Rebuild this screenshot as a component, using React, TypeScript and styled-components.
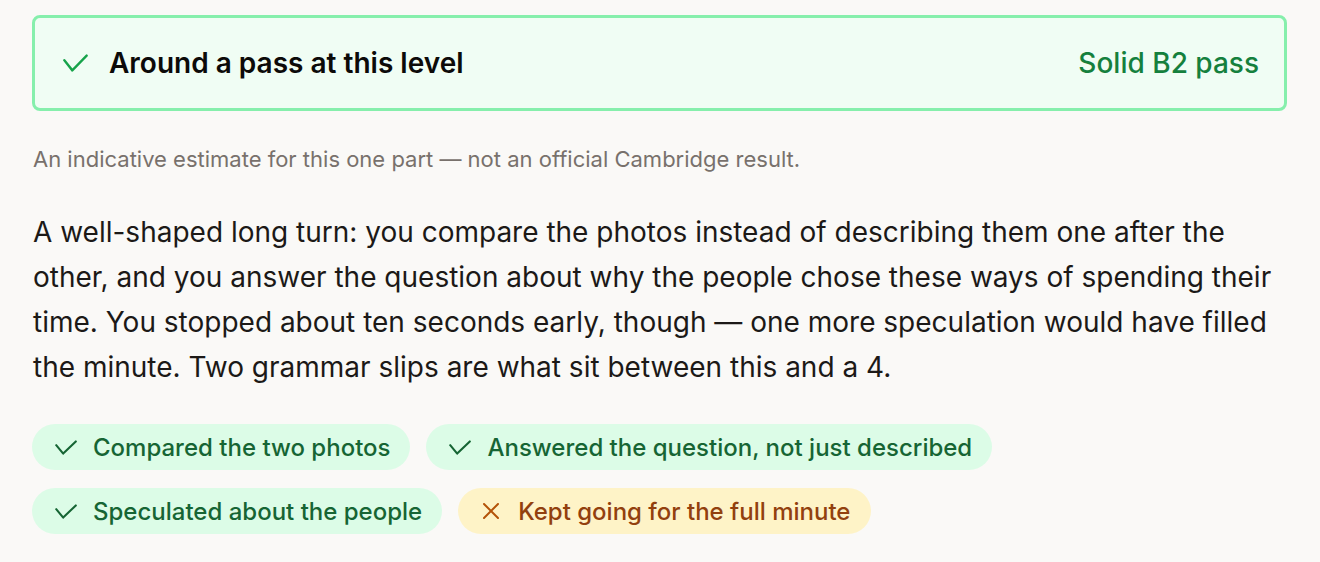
import React from 'react';
import styled, { createGlobalStyle } from 'styled-components';

const Global = createGlobalStyle`
  html, body {
    margin: 0;
    padding: 0;
    background: #faf9f7;
  }
  body {
    font-family: Inter, "Noto Sans", sans-serif;
    color: #1c1917;
  }
`;

const Page = styled.div`
  padding: 15px 33px 0 32px;
  display: flex;
  flex-direction: column;
`;

const Banner = styled.div`
  height: 96px;
  box-sizing: border-box;
  display: flex;
  align-items: center;
  justify-content: space-between;
  padding: 0 25px 0 28px;
  background: #f0fdf4;
  border: 3px solid #86efac;
  border-radius: 8px;
`;

const BannerLeft = styled.div`
  display: flex;
  align-items: center;
  gap: 21px;
`;

const BannerTitle = styled.span`
  font-size: 28px;
  font-weight: 600;
  color: #0c0a09;
`;

const Verdict = styled.span`
  font-size: 28px;
  font-weight: 500;
  color: #15803d;
`;

const Note = styled.p`
  margin: 35px 0 0 1px;
  font-size: 22px;
  line-height: 27px;
  color: #78716c;
`;

const Summary = styled.p`
  margin: 37px 0 0 1px;
  font-size: 28px;
  line-height: 45px;
  color: #1c1917;
`;

const Chips = styled.div`
  margin-top: 34px;
  display: flex;
  flex-wrap: wrap;
  gap: 18px 16px;
`;

const Chip = styled.div<{ $ok: boolean }>`
  height: 46px;
  box-sizing: border-box;
  display: inline-flex;
  align-items: center;
  gap: ${p => (p.$ok ? '16px' : '19px')};
  padding: ${p => (p.$ok ? '0 20px 0 23px' : '0 21px 0 25px')};
  border-radius: 23px;
  font-size: 24px;
  font-weight: 500;
  background: ${p => (p.$ok ? '#dcfce7' : '#fef3c7')};
  color: ${p => (p.$ok ? '#166534' : '#92400e')};
`;

const Check = ({ w, h, color }: { w: number; h: number; color: string }) => (
  <svg width={w} height={h} viewBox="0 0 22 15" preserveAspectRatio="none" fill="none" stroke={color} strokeWidth={2.1} strokeLinecap="round" strokeLinejoin="round">
    <path d="M1.2 5.2 8.2 13.6 20.8 1.4" />
  </svg>
);

const Cross = ({ size, color }: { size: number; color: string }) => (
  <svg width={size} height={size} viewBox="0 0 16 16" fill="none" stroke={color} strokeWidth={2} strokeLinecap="round">
    <path d="M15 1 1 15M1 1l14 14" />
  </svg>
);

const items = [
  { ok: true, text: 'Compared the two photos' },
  { ok: true, text: 'Answered the question, not just described' },
  { ok: true, text: 'Speculated about the people' },
  { ok: false, text: 'Kept going for the full minute' },
];

const App: React.FC = () => (
  <>
    <Global />
    <Page>
      <Banner>
        <BannerLeft>
          <Check w={25} h={18} color="#16a34a" />
          <BannerTitle>Around a pass at this level</BannerTitle>
        </BannerLeft>
        <Verdict>Solid B2 pass</Verdict>
      </Banner>
      <Note>An indicative estimate for this one part — not an official Cambridge result.</Note>
      <Summary>
        A well-shaped long turn: you compare the photos instead of describing them one after the other, and you
        answer the question about why the people chose these ways of spending their time. You stopped about ten
        seconds early, though — one more speculation would have filled the minute. Two grammar slips are what sit
        between this and a 4.
      </Summary>
      <Chips>
        {items.map(it => (
          <Chip key={it.text} $ok={it.ok}>
            {it.ok ? <Check w={22} h={15} color="#166534" /> : <Cross size={16} color="#b45309" />}
            {it.text}
          </Chip>
        ))}
      </Chips>
    </Page>
  </>
);

export default App;
